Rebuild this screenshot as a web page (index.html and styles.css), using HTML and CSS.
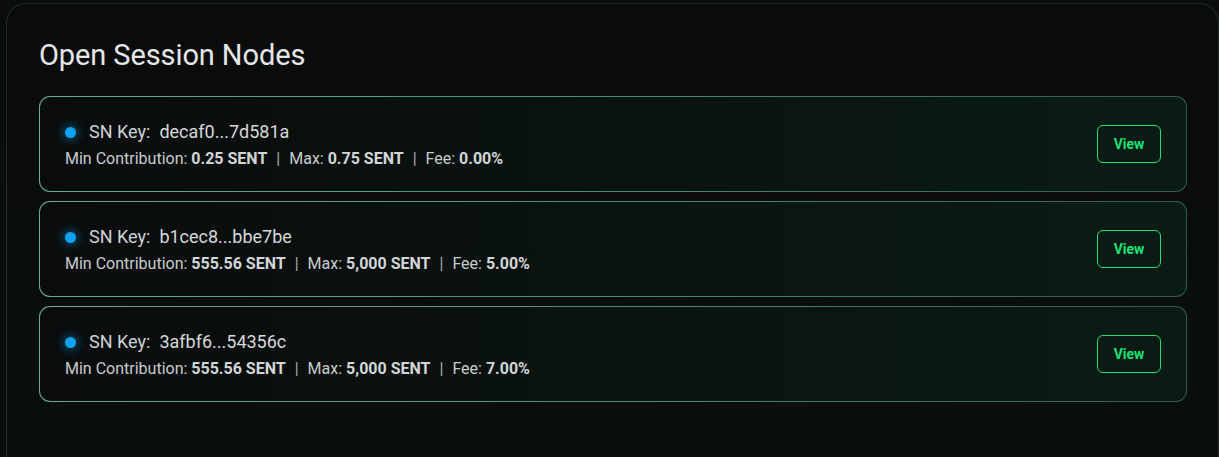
FILE: index.html
```html
<!DOCTYPE html>
<html lang="en">
<head>
<meta charset="utf-8">
<title>Open Session Nodes</title>
<link rel="stylesheet" href="styles.css">
</head>
<body>
<section class="panel">
  <h2 class="title">Open Session Nodes</h2>
  <div class="list">
    <div class="card">
      <div class="info">
        <div class="key-row"><span class="dot"></span><span class="key-label">SN Key:</span><span class="key">decaf0...7d581a</span></div>
        <div class="meta">Min Contribution: <b>0.25 SENT</b><span class="sep">|</span>Max: <b>0.75 SENT</b><span class="sep">|</span>Fee: <b>0.00%</b></div>
      </div>
      <button class="view">View</button>
    </div>
    <div class="card">
      <div class="info">
        <div class="key-row"><span class="dot"></span><span class="key-label">SN Key:</span><span class="key">b1cec8...bbe7be</span></div>
        <div class="meta">Min Contribution: <b>555.56 SENT</b><span class="sep">|</span>Max: <b>5,000 SENT</b><span class="sep">|</span>Fee: <b>5.00%</b></div>
      </div>
      <button class="view">View</button>
    </div>
    <div class="card">
      <div class="info">
        <div class="key-row"><span class="dot"></span><span class="key-label">SN Key:</span><span class="key">3afbf6...54356c</span></div>
        <div class="meta">Min Contribution: <b>555.56 SENT</b><span class="sep">|</span>Max: <b>5,000 SENT</b><span class="sep">|</span>Fee: <b>7.00%</b></div>
      </div>
      <button class="view">View</button>
    </div>
  </div>
</section>
</body>
</html>
```

FILE: styles.css
```css
html, body {
  margin: 0;
  padding: 0;
  background: #0b0c0c;
  font-family: Roboto, "Liberation Sans", sans-serif;
  overflow: hidden;
}

body {
  padding: 3px 0 0 6px;
}

.panel {
  box-sizing: border-box;
  height: 480px;
  border: 1px solid #1f2d28;
  border-bottom: none;
  border-radius: 20px 20px 0 0;
  background: linear-gradient(180deg, #0a0b0b 0%, #0a0f0e 100%);
  padding: 33px 31px 0 32px;
}

.title {
  margin: 0 0 23px 0;
  font-size: 29px;
  font-weight: 400;
  color: #e4e6e7;
  line-height: 36px;
  letter-spacing: -0.1px;
}

.list {
  display: flex;
  flex-direction: column;
  gap: 9px;
}

.card {
  height: 96px;
  box-sizing: border-box;
  display: flex;
  align-items: center;
  justify-content: space-between;
  padding: 0 25px 0 25px;
  border: 1px solid transparent;
  border-radius: 11px;
  background:
    linear-gradient(90deg, #0a0c0c 0%, #0a1510 60%, #0a1b15 100%) padding-box,
    linear-gradient(90deg, #6aaa9c 0%, #4f8f7c 45%, #2f5b47 100%) border-box;
}

.info {
  display: flex;
  flex-direction: column;
  gap: 6px;
  margin-top: 2px;
}

.key-row {
  display: flex;
  align-items: center;
  font-size: 18px;
  color: #cfd2d3;
  line-height: 22px;
}

.dot {
  width: 11px;
  height: 11px;
  border-radius: 50%;
  background: #0ea2f0;
  box-shadow: 0 0 9px 3px rgba(14, 162, 240, 0.35);
  margin-right: 13px;
}

.key-label {
  margin-right: 9px;
}

.key {
  color: #d6d9da;
}

.meta {
  font-size: 16px;
  color: #c9cccd;
  line-height: 20px;
}

.meta b {
  font-weight: 700;
  color: #d3d6d7;
}

.sep {
  margin: 0 9px;
  color: #a9adae;
}

.view {
  width: 64px;
  height: 38px;
  box-sizing: border-box;
  border: 1.5px solid #1fe072;
  border-radius: 6px;
  background: transparent;
  color: #1fe072;
  font-family: Roboto, "Liberation Sans", sans-serif;
  font-weight: 700;
  font-size: 14px;
  cursor: pointer;
}
```
